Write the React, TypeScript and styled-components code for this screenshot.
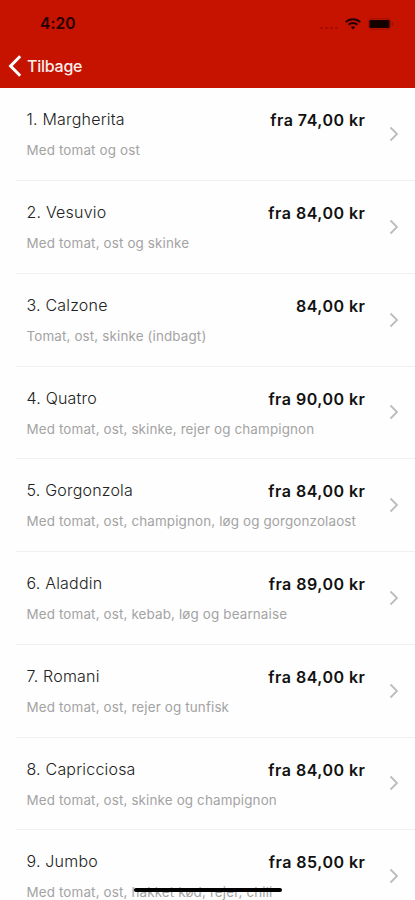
import React from "react";
import styled, { createGlobalStyle } from "styled-components";

const GlobalStyle = createGlobalStyle`
  * { box-sizing: border-box; }
  html, body { margin: 0; padding: 0; background: #fff; overflow: hidden; }
  body { font-family: Inter, "Liberation Sans", sans-serif; }
`;

const Screen = styled.main`
  position: relative;
  width: 415px;
  height: 900px;
  overflow: hidden;
  background: #fefefe;
`;

const Header = styled.header`
  height: 88px;
  background: #c51300;
`;

const StatusBar = styled.div`
  height: 44px;
  padding: 3px 21px 0 40px;
  display: flex;
  align-items: center;
  justify-content: space-between;
`;

const Clock = styled.time`
  font-size: 15.5px;
  font-weight: 600;
  line-height: 20px;
  letter-spacing: 0.1px;
  color: #260000;
`;

const StatusIcons = styled.div`
  display: flex;
  align-items: center;
`;

const WifiIcon = styled.svg`
  margin-left: 5px;
`;

const BatteryIcon = styled.svg`
  margin-left: 7px;
`;

const BackButton = styled.button`
  display: flex;
  align-items: center;
  height: 44px;
  padding: 0 0 0 8px;
  border: 0;
  background: none;
  color: #fff;
  font: 500 16px/20px Inter, sans-serif;
  gap: 5px;
`;

const BackLabel = styled.span`
  letter-spacing: -0.25px;
  opacity: 0.93;
`;

const List = styled.ul`
  list-style: none;
  margin: 0;
  padding: 0.3px 0 0;
`;

const Row = styled.li`
  display: flex;
  height: 92.75px;
  margin-left: 16px;
  padding-left: 10.5px;
  border-bottom: 1px solid #f0f0f0;
`;

const Content = styled.div`
  flex: 1;
  min-width: 0;
  padding-top: 21px;
`;

const TitleLine = styled.div`
  display: flex;
  justify-content: space-between;
  line-height: 20px;
`;

const Title = styled.span`
  font-size: 16px;
  font-weight: 350;
  letter-spacing: 0.2px;
  color: #222;
`;

const Price = styled.span`
  margin-right: -0.4px;
  padding-top: 1px;
  font-size: 16px;
  font-weight: 600;
  letter-spacing: 0.48px;
  color: #111;
`;

const Description = styled.p`
  margin: 11px 0 0;
  font-size: 13.4px;
  line-height: 18px;
  letter-spacing: 0.15px;
  color: #a3a3a3;
  white-space: nowrap;
`;

const Disclosure = styled.div`
  width: 50px;
  display: flex;
  align-items: center;
  padding-left: 24px;
`;

const HomeIndicator = styled.div`
  position: absolute;
  left: 133.5px;
  top: 888px;
  width: 148.5px;
  height: 4px;
  border-radius: 2px;
  background: #000;
`;

const pizzas = [
  { title: "1. Margherita", price: "fra 74,00 kr", text: "Med tomat og ost" },
  { title: "2. Vesuvio", price: "fra 84,00 kr", text: "Med tomat, ost og skinke" },
  { title: "3. Calzone", price: "84,00 kr", text: "Tomat, ost, skinke (indbagt)" },
  { title: "4. Quatro", price: "fra 90,00 kr", text: "Med tomat, ost, skinke, rejer og champignon" },
  { title: "5. Gorgonzola", price: "fra 84,00 kr", text: "Med tomat, ost, champignon, løg og gorgonzolaost" },
  { title: "6. Aladdin", price: "fra 89,00 kr", text: "Med tomat, ost, kebab, løg og bearnaise" },
  { title: "7. Romani", price: "fra 84,00 kr", text: "Med tomat, ost, rejer og tunfisk" },
  { title: "8. Capricciosa", price: "fra 84,00 kr", text: "Med tomat, ost, skinke og champignon" },
  { title: "9. Jumbo", price: "fra 85,00 kr", text: "Med tomat, ost, hakket kød, rejer, chili" },
];

const CellularDots = () => (
  <svg width="20" height="12" viewBox="0 0 20 12" fill="#a10e00">
    <rect x="0" y="9" width="3" height="2" rx="1" />
    <rect x="5" y="9" width="3" height="2" rx="1" />
    <rect x="10" y="9" width="3" height="2" rx="1" />
    <rect x="15" y="9" width="3" height="2" rx="1" />
  </svg>
);

const Wifi = () => (
  <WifiIcon width="16" height="12" viewBox="0 0 16 12" fill="none" stroke="#260000" strokeWidth="1.9">
    <path d="M.8 4.1C4.7.2 11.3.2 15.2 4.1" />
    <path d="M3.5 6.8c2.5-2.4 6.5-2.4 9 0" />
    <path d="M5.8 9.1 8 11.4l2.2-2.3c-1.2-1.1-3.2-1.1-4.4 0Z" fill="#260000" stroke="none" />
  </WifiIcon>
);

const Battery = () => (
  <BatteryIcon width="26" height="12" viewBox="0 0 26 12">
    <rect x=".5" y=".7" width="22" height="10.6" rx="2.8" fill="none" stroke="#a00f00" />
    <rect x="1.5" y="2" width="20" height="8" rx="1.2" fill="#150000" />
    <path d="M23.7 4.2c1.8.5 1.8 3.1 0 3.6z" fill="#8c0d00" />
  </BatteryIcon>
);

export default function App() {
  return (
    <Screen>
      <GlobalStyle />
      <Header>
        <StatusBar>
          <Clock>4:20</Clock>
          <StatusIcons>
            <CellularDots />
            <Wifi />
            <Battery />
          </StatusIcons>
        </StatusBar>
        <BackButton>
          <svg width="14" height="22" viewBox="0 0 14 22" fill="none" stroke="#fff" strokeWidth="3">
            <path d="M12.2 1.3 2.6 11l9.6 9.7" />
          </svg>
          <BackLabel>Tilbage</BackLabel>
        </BackButton>
      </Header>
      <List>
        {pizzas.map((pizza) => (
          <Row key={pizza.title}>
            <Content>
              <TitleLine>
                <Title>{pizza.title}</Title>
                <Price>{pizza.price}</Price>
              </TitleLine>
              <Description>{pizza.text}</Description>
            </Content>
            <Disclosure>
              <svg width="10" height="16" viewBox="0 0 10 16" fill="none" stroke="#bcbcbc" strokeWidth="1.8">
                <path d="m1.5 1.5 6.5 6.5-6.5 6.5" />
              </svg>
            </Disclosure>
          </Row>
        ))}
      </List>
      <HomeIndicator />
    </Screen>
  );
}
